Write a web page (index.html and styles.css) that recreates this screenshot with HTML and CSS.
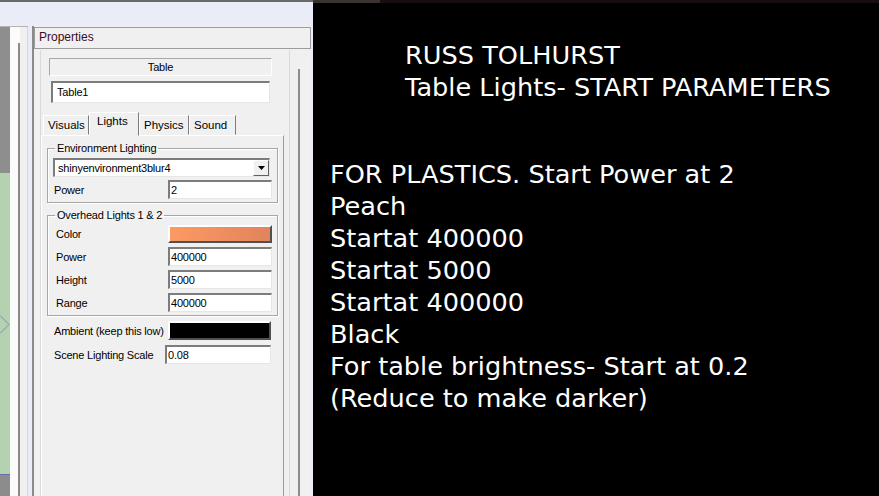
FILE: index.html
```html
<!DOCTYPE html>
<html>
  <head>
    <title>Table Lights</title>
    <link rel="stylesheet" href="styles.css">
  </head>
  <body>
    <div class="screen">
      <div class="editor">
        <div class="workspace">
          <div class="sidepane">
            <div class="viewport">
              <div class="vp-top"></div>
              <div class="vp-table">
                <svg class="chevron" width="10" height="20" viewBox="0 0 10 20">
                  <polyline points="0,0.5 9,9.5 0,18.5" fill="none" stroke="#7d8db4" stroke-width="1"/>
                </svg>
              </div>
              <div class="vp-bottom"></div>
            </div>
            <div class="sbar"><div class="sbar-line"></div></div>
            <div class="sedge"></div>
          </div>

          <div class="panel">
            <div class="panel-head">Properties</div>
            <div class="panel-body">
              <div class="pinner">
                <div class="objtype">Table</div>
                <div class="field namefield">Table1</div>

                <div class="tabs">
                  <div class="tab">Visuals</div>
                  <div class="tab active">Lights</div>
                  <div class="tab">Physics</div>
                  <div class="tab">Sound</div>
                </div>

                <div class="tabpanel">
                  <fieldset class="grp grp-env">
                    <legend>Environment Lighting</legend>
                    <div class="combo">
                      <span>shinyenvironment3blur4</span>
                      <div class="combo-btn">
                        <svg width="7" height="4" viewBox="0 0 7 4"><polygon points="0,0 7,0 3.5,4" fill="#000"/></svg>
                      </div>
                    </div>
                    <div class="row">
                      <span class="lbl">Power</span>
                      <div class="field val">2</div>
                    </div>
                  </fieldset>

                  <fieldset class="grp grp-over">
                    <legend>Overhead Lights 1 &amp; 2</legend>
                    <div class="row">
                      <span class="lbl">Color</span>
                      <div class="swatch peach"></div>
                    </div>
                    <div class="row">
                      <span class="lbl">Power</span>
                      <div class="field val">400000</div>
                    </div>
                    <div class="row">
                      <span class="lbl">Height</span>
                      <div class="field val">5000</div>
                    </div>
                    <div class="row">
                      <span class="lbl">Range</span>
                      <div class="field val">400000</div>
                    </div>
                  </fieldset>

                  <div class="loose">
                    <div class="row">
                      <span class="lbl">Ambient (keep this low)</span>
                      <div class="swatch black"></div>
                    </div>
                    <div class="row">
                      <span class="lbl">Scene Lighting Scale</span>
                      <div class="field val wide">0.08</div>
                    </div>
                  </div>
                </div>
              </div>
              <div class="pscroll"><div class="pscroll-line"></div></div>
            </div>
          </div>
        </div>
      </div>

      <div class="notes">
        <div class="notes-top"></div>
        <div class="heading">
          <div>RUSS TOLHURST</div>
          <div>Table Lights- START PARAMETERS</div>
        </div>
        <div class="body-text">
          <div>FOR PLASTICS. Start Power at 2</div>
          <div>Peach</div>
          <div>Startat 400000</div>
          <div>Startat 5000</div>
          <div>Startat 400000</div>
          <div>Black</div>
          <div>For table brightness- Start at 0.2</div>
          <div>(Reduce to make darker)</div>
        </div>
      </div>
    </div>
  </body>
</html>
```

FILE: styles.css
```css
body {
  margin: 0;
  overflow: hidden;
  font-family: "Liberation Sans", Arial, sans-serif;
  font-size: 11px;
  color: #000000;
}
.screen {
  display: flex;
  width: 879px;
  height: 496px;
}

/* editor side */
.editor {
  width: 313px;
  height: 496px;
  background-color: #eaecf8;
  border-top: 2px solid #6a6a6a;
  box-sizing: border-box;
  display: flex;
  flex-direction: column;
}
.workspace {
  flex: 1;
  display: flex;
  gap: 4px;
  padding-top: 24px;
  min-height: 0;
}
.sidepane {
  width: 28px;
  display: flex;
  border-top: 1px solid #b4b4b4;
}
.viewport {
  width: 10px;
  display: flex;
  flex-direction: column;
}
.vp-top {
  height: 146px;
  background-color: #8e8e8e;
}
.vp-table {
  position: relative;
  height: 301px;
  background-color: #b4d2b0;
  border-bottom: 1px solid #6c6cac;
}
.chevron {
  position: absolute;
  left: 0;
  top: 142px;
}
.vp-bottom {
  flex: 1;
  background-color: #8c8c8c;
}
.sbar {
  width: 10px;
  background-color: #fbfbfb;
  display: flex;
  justify-content: flex-end;
}
.sbar-line {
  width: 2px;
  margin-top: 16px;
  background-color: #8a8a8a;
}
.sedge {
  width: 7px;
  background-color: #f0f0f0;
  border-right: 1px solid #d6d6d6;
}

.panel {
  width: 279px;
  border-left: 2px solid #8a8a8a;
  background-color: #f0f0f0;
  display: flex;
  flex-direction: column;
  box-sizing: border-box;
  letter-spacing: -0.2px;
}
.panel-head {
  height: 20px;
  margin-top: 1px;
  border: 1px solid #9c9c9c;
  padding-left: 4px;
  font-size: 12px;
  line-height: 19px;
  color: #3e0c1e;
  letter-spacing: 0;
}
.panel-body {
  flex: 1;
  display: flex;
  padding: 1px 0 0 6px;
}
.pinner {
  width: 248px;
  border-left: 1px solid #dadada;
  border-right: 1px solid #dadada;
  display: flex;
  flex-direction: column;
}
.pscroll {
  flex: 1;
  padding-left: 8px;
}
.pscroll-line {
  width: 2px;
  height: 100%;
  margin-top: 19px;
  background-color: #8c8c8c;
}

.objtype {
  margin: 8px 0 0 8px;
  width: 223px;
  height: 18px;
  box-sizing: border-box;
  border: 1px solid;
  border-color: #a8a8a8 #ffffff #ffffff #a8a8a8;
  text-align: center;
  line-height: 16px;
}
.field {
  background-color: #ffffff;
  box-sizing: border-box;
  border-style: solid;
  border-width: 2px 1px 1px 2px;
  border-color: #7c7c7c #e6e6e6 #e6e6e6 #7c7c7c;
  white-space: nowrap;
}
.namefield {
  margin: 5px 0 0 10px;
  width: 219px;
  height: 22px;
  padding-left: 4px;
  line-height: 18px;
}

.tabs {
  display: flex;
  align-items: flex-end;
  margin-top: 9px;
  padding-left: 2px;
  height: 23px;
  position: relative;
  z-index: 1;
}
.tab {
  height: 20px;
  box-sizing: border-box;
  padding: 0 4px;
  border: 1px solid;
  border-color: #ffffff #7c7c7c transparent #ffffff;
  line-height: 18px;
  font-size: 11.5px;
  letter-spacing: 0;
}
.tab:nth-child(1) { width: 46px; }
.tab:nth-child(3) { width: 50px; }
.tab:nth-child(4) { width: 47px; }
.tab.active {
  width: 50px;
  height: 24px;
  margin-bottom: -1px;
  background-color: #f0f0f0;
  line-height: 17px;
  padding-left: 7px;
}

.tabpanel {
  width: 243px;
  flex: 1;
  box-sizing: border-box;
  border-style: solid;
  border-width: 1px 1px 0 1px;
  border-color: #ffffff #9a9a9a #ffffff #ffffff;
}

.grp {
  margin: 6px 5px 0 5px;
  padding: 0 0 3px 6px;
  border: 1px solid #a6a6a6;
  box-shadow: inset 1px 1px 0 #ffffff, 1px 1px 0 #ffffff;
}
.grp legend {
  margin-left: 1px;
  padding: 0 2px;
  line-height: 13px;
}
.grp-over {
  margin-top: 6px;
  padding-bottom: 3px;
}

.combo {
  margin: 3px 0 0 -1px;
  width: 217px;
  height: 19px;
  box-sizing: border-box;
  background-color: #ffffff;
  border-style: solid;
  border-width: 2px 1px 1px 2px;
  border-color: #7c7c7c #e6e6e6 #e6e6e6 #7c7c7c;
  display: flex;
  align-items: center;
  justify-content: space-between;
  padding-left: 3px;
}
.combo-btn {
  width: 16px;
  height: 16px;
  box-sizing: border-box;
  background-color: #f0f0f0;
  border: 1px solid;
  border-color: #ffffff #606060 #606060 #ffffff;
  display: flex;
  align-items: center;
  justify-content: center;
}

.row {
  display: flex;
  align-items: center;
  margin-top: 4px;
}
.grp-env .row {
  margin-top: 3px;
}
.grp-over legend + .row {
  margin-top: 3px;
}
.lbl {
  width: 114px;
  flex: none;
  white-space: nowrap;
}
.grp-over .lbl {
  padding-left: 2px;
  width: 112px;
}
.val {
  width: 104px;
  height: 19px;
  padding-left: 1px;
  line-height: 16px;
}
.swatch {
  width: 104px;
  height: 19px;
  box-sizing: border-box;
  border: 2px solid;
  border-color: #ffffff #505050 #505050 #ffffff;
}
.peach {
  height: 18px;
  background: linear-gradient(to right, #fd9a63, #e1845c);
}
.black {
  width: 103px;
  background-color: #000000;
}
.loose {
  padding-left: 12px;
  margin-top: 5px;
}
.loose .row {
  margin-top: 5px;
}
.loose .row:first-child {
  margin-top: 0;
}
.wide {
  width: 106px;
  margin-left: -3px;
}

/* notes side */
.notes {
  flex: 1;
  background-color: #000000;
  color: #ffffff;
  font-family: "DejaVu Sans", Verdana, sans-serif;
  font-size: 25.6px;
  line-height: 32px;
}
.notes-top {
  height: 3px;
  background: linear-gradient(to right, #3a3430 67px, #170d12 67px);
}
.heading {
  margin-top: 36px;
  padding-left: 92px;
}
.body-text {
  margin-top: 55px;
  padding-left: 17px;
}
```
